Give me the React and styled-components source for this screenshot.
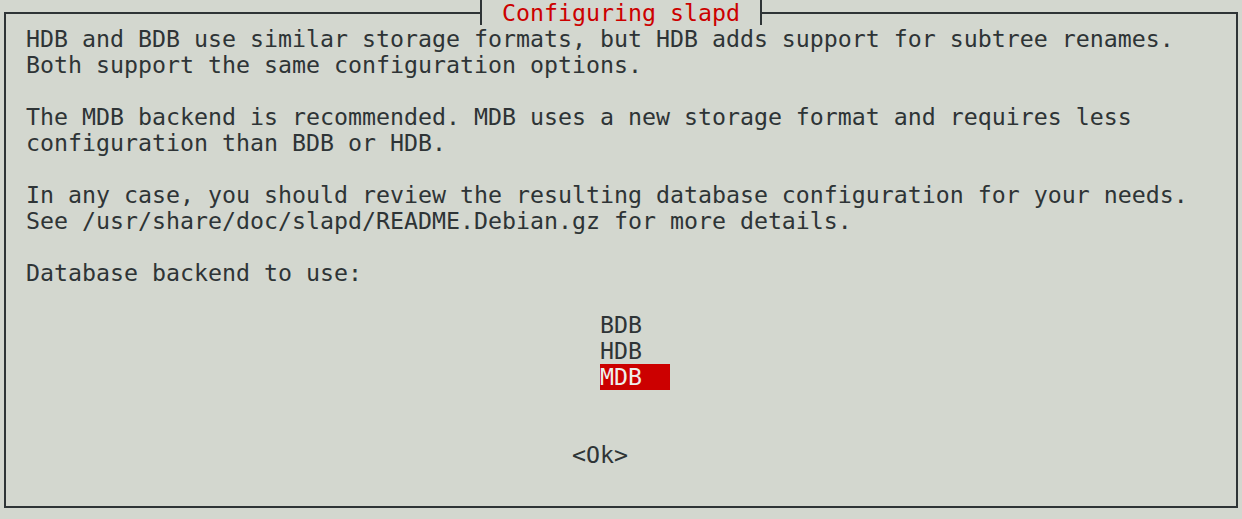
import React from 'react';
import styled, { createGlobalStyle } from 'styled-components';

const GlobalStyle = createGlobalStyle`
    html, body {
        margin: 0;
        padding: 0;
        background: #d3d7cf;
        overflow: hidden;
    }
    body {
        font-family: "DejaVu Sans Mono", "Liberation Mono", monospace;
        font-size: 23.25px;
        line-height: 26px;
        color: #2e3436;
    }
`

const Screen = styled.div`
    width: 1242px;
    height: 519px;
    padding: 12px 4px 0 4px;
    box-sizing: border-box;
`
const Dialog = styled.div`
    position: relative;
    width: 1234px;
    height: 496px;
    box-sizing: border-box;
    border: 2px solid #2e3436;
    padding: 12px 20px;
    display: flex;
    flex-direction: column;
`
const Title = styled.div`
    position: absolute;
    top: -14px;
    left: 474px;
    height: 25px;
    padding: 0 20px;
    background: #d3d7cf;
    border-left: 2px solid #2e3436;
    border-right: 2px solid #2e3436;
    color: #cc0000;
    white-space: pre;
`
const Paragraph = styled.p`
    margin: 0 0 26px 0;
    white-space: pre;
`
const Menu = styled.ul`
    list-style: none;
    margin: 26px 0 52px 574px;
    padding: 0;
    display: flex;
    flex-direction: column;
`
const MenuItem = styled.li`
    width: 70px;
    height: 26px;
    white-space: pre;
    background: ${props => (props.selected ? '#cc0000' : 'transparent')};
    color: ${props => (props.selected ? '#eeeeec' : '#2e3436')};
`
const OkButton = styled.div`
    margin-left: 546px;
    white-space: pre;
`

const backends = ['BDB', 'HDB', 'MDB'];

const App = () => {
    return (
        <Screen>
            <GlobalStyle />
            <Dialog>
                <Title>Configuring slapd</Title>
                <Paragraph>
                    HDB and BDB use similar storage formats, but HDB adds support for subtree renames.{'\n'}
                    Both support the same configuration options.
                </Paragraph>
                <Paragraph>
                    The MDB backend is recommended. MDB uses a new storage format and requires less{'\n'}
                    configuration than BDB or HDB.
                </Paragraph>
                <Paragraph>
                    In any case, you should review the resulting database configuration for your needs.{'\n'}
                    See /usr/share/doc/slapd/README.Debian.gz for more details.
                </Paragraph>
                <Paragraph style={{ marginBottom: 0 }}>Database backend to use:</Paragraph>
                <Menu>
                    {backends.map(b => (
                        <MenuItem key={b} selected={b === 'MDB'}>{b}</MenuItem>
                    ))}
                </Menu>
                <OkButton>{'<Ok>'}</OkButton>
            </Dialog>
        </Screen>
    )
};

export default App;
